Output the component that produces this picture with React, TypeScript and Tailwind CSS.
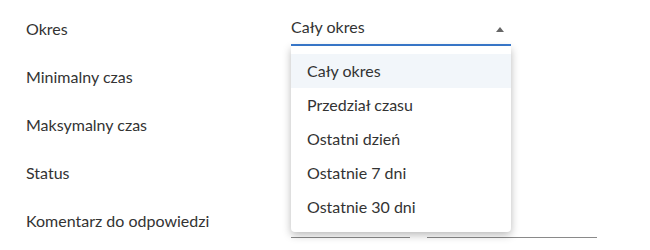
import React from "react";

const labels = ["Okres", "Minimalny czas", "Maksymalny czas", "Status", "Komentarz do odpowiedzi"];
const options = ["Cały okres", "Przedział czasu", "Ostatni dzień", "Ostatnie 7 dni", "Ostatnie 30 dni"];

export default function App() {
  return (
    <div
      className="relative h-[250px] w-[650px] overflow-hidden bg-white text-[16px] leading-[20px] text-[#333]"
      style={{ fontFamily: "Lato, 'Open Sans', sans-serif" }}
    >
      <div className="flex flex-col pt-[5px] pl-[26px]">
        {/* Row 1 */}
        <div className="flex h-[48px]">
          <div className="flex w-[265px] items-center">{labels[0]}</div>
          <div className="flex h-[41px] w-[220px] items-start justify-between border-b-2 border-[#3a7bd0] pt-[12px] pr-[7px]">
            <span>Cały okres</span>
            <svg width="8" height="5" viewBox="0 0 8 5" className="mt-[10px]">
              <path d="M0 5 L4 0 L8 5 Z" fill="#666" />
            </svg>
          </div>
        </div>
        <div className="flex h-[48px]">
          <div className="flex w-[265px] items-center">{labels[1]}</div>
        </div>
        <div className="flex h-[48px]">
          <div className="flex w-[265px] items-center">{labels[2]}</div>
        </div>
        <div className="flex h-[48px]">
          <div className="flex w-[265px] items-center">{labels[3]}</div>
        </div>
        <div className="flex h-[48px]">
          <div className="flex w-[265px] items-center">{labels[4]}</div>
          <div className="flex h-[41px] items-start gap-[17px]">
            <div className="h-[41px] w-[119px] border-b border-[#8a8a8a]" />
            <div className="h-[41px] w-[170px] border-b border-[#8a8a8a]" />
          </div>
        </div>
      </div>

      <div className="absolute left-[291px] top-[46px] w-[220px] rounded-b-[4px] bg-white py-[8px] shadow-[0_3px_8px_rgba(0,0,0,0.28)]">
        {options.map((o, i) => (
          <div
            key={o}
            className={`flex h-[34px] items-center pl-[16px] ${i === 0 ? "bg-[#f2f6fa]" : ""}`}
          >
            {o}
          </div>
        ))}
      </div>
    </div>
  );
}
